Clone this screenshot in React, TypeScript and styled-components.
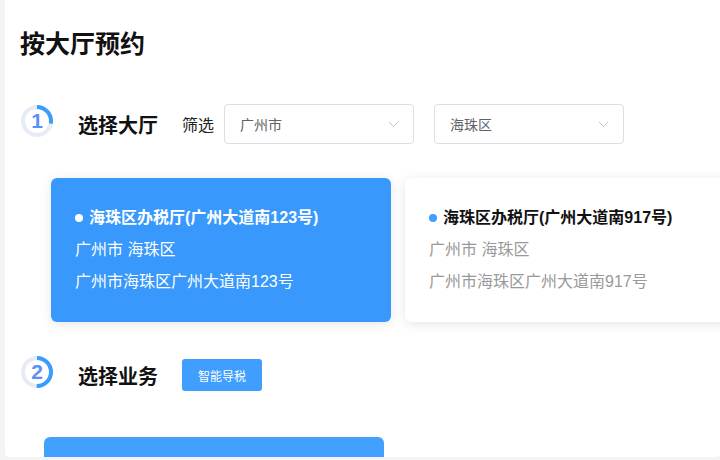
import React from "react";
import styled, { createGlobalStyle } from "styled-components";

const GlobalStyle = createGlobalStyle`
  html, body {
    margin: 0;
    padding: 0;
    background: #f4f4f5;
    overflow: hidden;
    font-family: "Liberation Sans", Arial, "Noto Sans CJK SC", sans-serif;
  }
`;

interface Hall {
  name: string;
  area: string;
  address: string;
}

const halls: Hall[] = [
  { name: "海珠区办税厅(广州大道南123号)", area: "广州市 海珠区", address: "广州市海珠区广州大道南123号" },
  { name: "海珠区办税厅(广州大道南917号)", area: "广州市 海珠区", address: "广州市海珠区广州大道南917号" },
];

function StepRing({ step, percent }: { step: number; percent: number }) {
  const r = 14;
  const c = 2 * Math.PI * r;
  return (
    <RingWrap>
      <svg width="32" height="32" viewBox="0 0 32 32">
        <circle cx="16" cy="16" r={r} fill="none" stroke="#e6ebf5" strokeWidth="4" />
        <circle
          cx="16"
          cy="16"
          r={r}
          fill="none"
          stroke="#3a9cfd"
          strokeWidth="4"
          strokeDasharray={`${c * percent} ${c}`}
          transform="rotate(-90 16 16)"
        />
      </svg>
      <RingNum>{step}</RingNum>
    </RingWrap>
  );
}

function Chevron() {
  return (
    <svg width="11" height="7" viewBox="0 0 11 7">
      <polyline points="1,1 5.5,5.5 10,1" fill="none" stroke="#c0c4cc" strokeWidth="1" />
    </svg>
  );
}

export default function App() {
  return (
    <>
      <GlobalStyle />
      <Panel>
        <Title>按大厅预约</Title>
        <StepRow>
          <StepRing step={1} percent={0.28} />
          <StepTitle>选择大厅</StepTitle>
          <FilterLabel>筛选</FilterLabel>
          <Select>
            <span>广州市</span>
            <Chevron />
          </Select>
          <Select>
            <span>海珠区</span>
            <Chevron />
          </Select>
        </StepRow>
        <CardRow>
          {halls.map((h, i) => (
            <HallCard key={h.address} $active={i === 0}>
              <HallName $active={i === 0}>
                <Dot $active={i === 0} />
                {h.name}
              </HallName>
              <HallLine $active={i === 0}>{h.area}</HallLine>
              <HallLine $active={i === 0}>{h.address}</HallLine>
            </HallCard>
          ))}
        </CardRow>
        <StepRow $second>
          <StepRing step={2} percent={0.5} />
          <StepTitle>选择业务</StepTitle>
          <GuideButton>智能导税</GuideButton>
        </StepRow>
        <ServiceCard />
      </Panel>
    </>
  );
}

const Panel = styled.div`
  margin-left: 5px;
  height: 457px;
  background: #fff;
  border-radius: 0 0 4px 4px;
  padding-left: 15px;
  overflow: hidden;
  box-sizing: border-box;
  display: flex;
  flex-direction: column;
`;

const Title = styled.h1`
  margin: 28px 0 0;
  font-size: 25px;
  line-height: 32px;
  font-weight: bold;
  color: #111;
`;

const StepRow = styled.div<{ $second?: boolean }>`
  display: flex;
  align-items: center;
  height: 40px;
  margin-top: ${({ $second }) => ($second ? "33px" : "44px")};
  flex: none;
`;

const RingWrap = styled.div`
  position: relative;
  width: 32px;
  height: 32px;
  margin-left: 1px;
  margin-bottom: 7px;
  flex: none;
  svg {
    display: block;
  }
`;

const RingNum = styled.span`
  position: absolute;
  inset: 0;
  display: flex;
  align-items: center;
  justify-content: center;
  font-size: 21px;
  font-weight: bold;
  color: #5b8ff9;
`;

const StepTitle = styled.div`
  margin-left: 25px;
  font-size: 20px;
  font-weight: bold;
  color: #111;
`;

const FilterLabel = styled.div`
  margin-left: 24px;
  font-size: 16px;
  color: #222;
`;

const Select = styled.div`
  margin-left: 10px;
  width: 190px;
  height: 40px;
  box-sizing: border-box;
  border: 1px solid #dcdfe6;
  border-radius: 4px;
  padding: 0 14px 0 15px;
  display: flex;
  align-items: center;
  justify-content: space-between;
  font-size: 14px;
  color: #606266;
  & + & {
    margin-left: 20px;
  }
`;

const CardRow = styled.div`
  display: flex;
  gap: 14px;
  margin: 34px 0 0 31px;
  flex: none;
`;

const HallCard = styled.div<{ $active: boolean }>`
  width: 340px;
  height: 144px;
  flex: none;
  box-sizing: border-box;
  padding: 24px 24px 0;
  border-radius: 6px;
  background: ${({ $active }) => ($active ? "#3898fc" : "#fff")};
  box-shadow: 0 2px 12px 0 rgba(0, 0, 0, 0.1);
`;

const HallName = styled.div<{ $active: boolean }>`
  display: flex;
  align-items: center;
  font-size: 16px;
  line-height: 32px;
  font-weight: bold;
  color: ${({ $active }) => ($active ? "#fff" : "#111")};
`;

const Dot = styled.span<{ $active: boolean }>`
  width: 8px;
  height: 8px;
  border-radius: 50%;
  margin: 0 6px 0 0;
  background: ${({ $active }) => ($active ? "#fff" : "#409eff")};
`;

const HallLine = styled.div<{ $active: boolean }>`
  font-size: 16px;
  line-height: 32px;
  color: ${({ $active }) => ($active ? "#fff" : "#999")};
`;

const GuideButton = styled.button`
  margin-left: 24px;
  width: 80px;
  height: 32px;
  border: none;
  border-radius: 3px;
  background: #409eff;
  color: #fff;
  font-size: 12px;
  font-family: inherit;
  padding: 0;
`;

const ServiceCard = styled.div`
  margin: 42px 0 0 24px;
  width: 340px;
  height: 144px;
  flex: none;
  border-radius: 6px;
  background: #42a0ff;
`;
